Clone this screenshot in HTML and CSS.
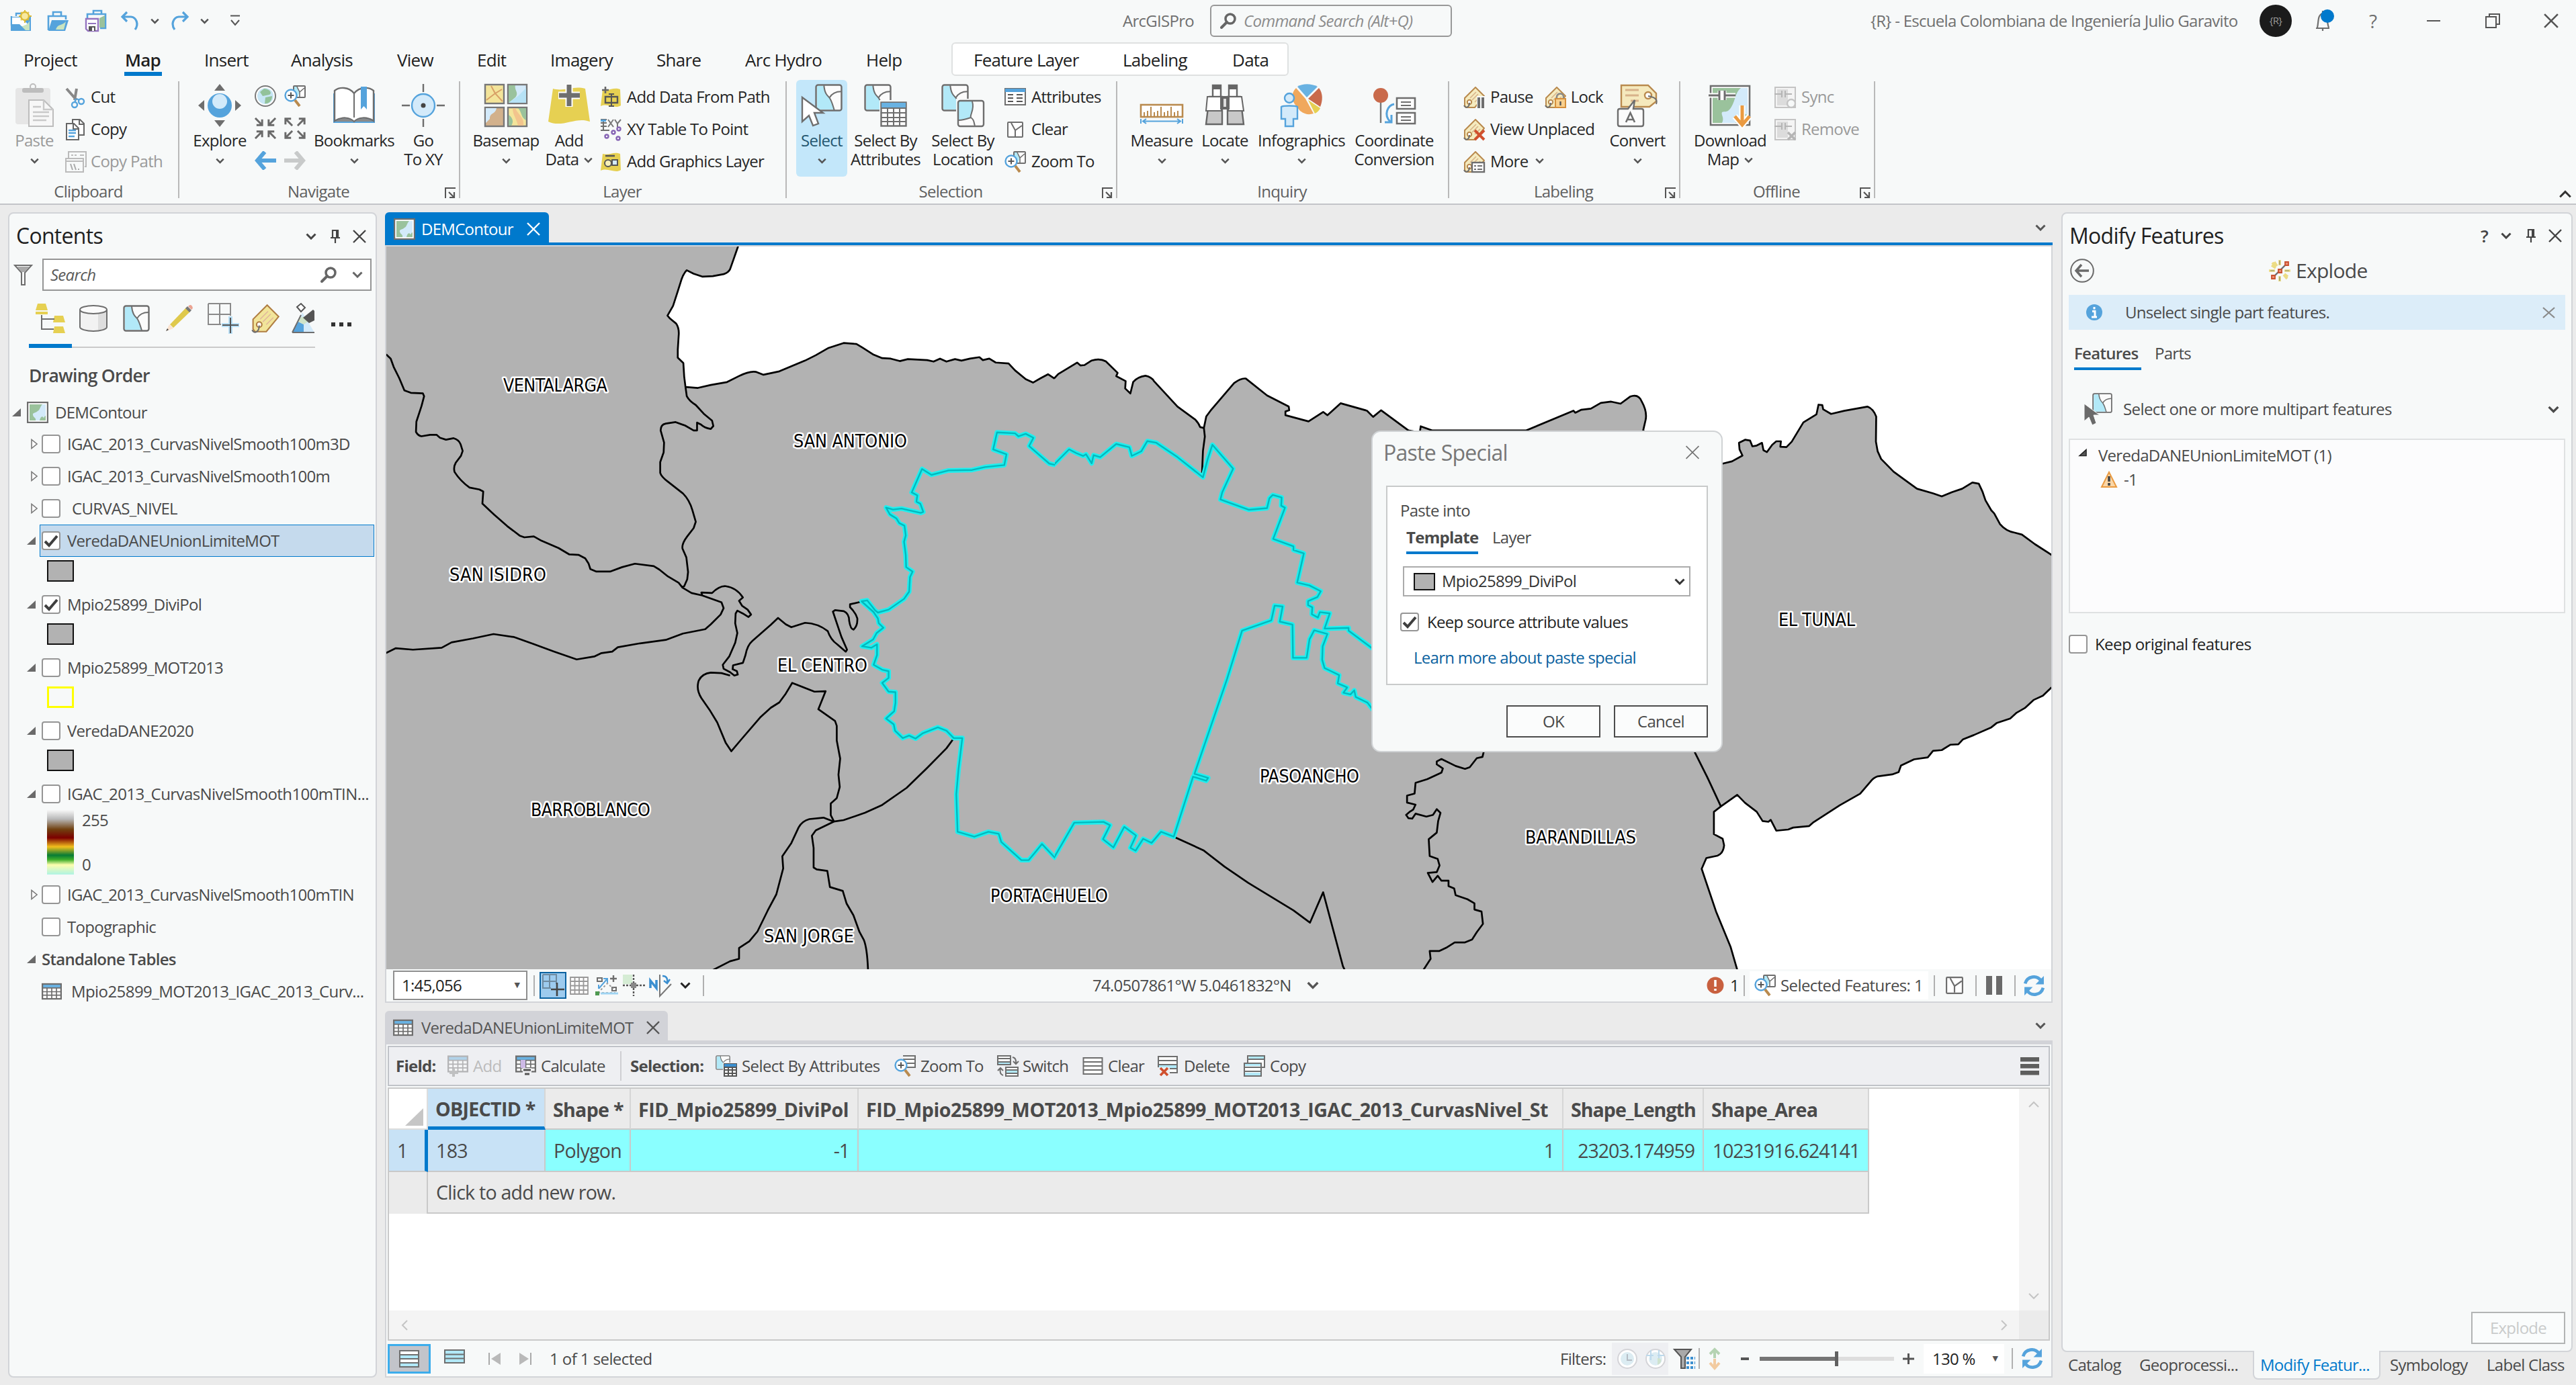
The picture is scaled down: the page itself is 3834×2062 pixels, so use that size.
FILE: index.html
```html
<!DOCTYPE html>
<html lang="en">
<head>
<meta charset="utf-8">
<title>ArcGISPro</title>
<link rel="stylesheet" href="styles.css">
</head>
<body>
<svg class="defs" width="0" height="0">
  <symbol id="chev" viewBox="0 0 16 10"><path d="M1.5 1.5 8 8 14.500 1.500" fill="none" stroke="currentColor" stroke-width="3"/></symbol>
  <symbol id="x" viewBox="0 0 20 20"><path d="M1 1 19 19M19 1 1 19" fill="none" stroke="currentColor" stroke-width="2.400"/></symbol>
  <symbol id="pin" viewBox="0 0 14 20"><path d="M3 12V1H11V12M0 12H14M7 12V20" fill="none" stroke="currentColor" stroke-width="2.200"/><path d="M8 1H12V12H8Z" fill="currentColor"/></symbol>
  <symbol id="mag" viewBox="0 0 24 24"><circle cx="15" cy="9" r="7" fill="none" stroke="currentColor" stroke-width="3.500"/><path d="M10 14 2 22" stroke="currentColor" stroke-width="4" stroke-linecap="round"/></symbol>
  <symbol id="poly" viewBox="0 0 40 40"><rect x="1.500" y="1.500" width="37" height="37" rx="3" fill="#fbfbfb"/><path d="M3 3H13C14 14 18 17 21 20 25 26 26 32 28 37H3Z" fill="#b2e9f8"/><path d="M13 2C14 14 18 17 21 20 25 26 26 32 28 38M21 20C25 13 31 11 38 11" fill="none" stroke="#6e6e6e" stroke-width="2"/><rect x="1.500" y="1.500" width="37" height="37" rx="3" fill="none" stroke="#6e6e6e" stroke-width="2.400"/></symbol>
  <symbol id="table" viewBox="0 0 32 26"><rect x="1.500" y="1.500" width="29" height="23" fill="#fff"/><rect x="1" y="1" width="30" height="6" fill="#69b2e2"/><path d="M1 7.500H31M1 13.500H31M1 19H31M8.500 7V25M16 7V25M23.500 7V25" stroke="#6e6e6e" stroke-width="1.800"/><rect x="1.200" y="1.200" width="29.600" height="23.600" fill="none" stroke="#6e6e6e" stroke-width="2.400"/></symbol>
  <symbol id="map" viewBox="0 0 32 32"><rect x="1" y="1" width="30" height="30" fill="#fff" stroke="#6e6e6e" stroke-width="2.400"/><path d="M4 4H28V28H4Z" fill="#9ac29c"/><path d="M23 4H28V21C25 22 26 25 25 24 22 20 20 24 19 28H13C14 24 10 24 9 20 8 16 13 17 16 14 20 12 19 8 23 4Z" fill="#d3eafa"/></symbol>
  <symbol id="tag" viewBox="0 0 32 32"><path d="M18 1 31 14 17 31H4L2 28V17Z" fill="#f5ebbf" stroke="#b98a4e" stroke-width="2"/><path d="M10 17 19 8M13 20 22 11M17 23 25 15" stroke="#d9b48a" stroke-width="1.600"/><circle cx="9" cy="23" r="3.200" fill="#fff" stroke="#b98a4e" stroke-width="2"/><path d="M9 24C9 31 3 33 1 28" fill="none" stroke="#6e6e6e" stroke-width="2"/></symbol>
  <symbol id="launch" viewBox="0 0 16 16"><path d="M1 16V1H16" fill="none" stroke="#555" stroke-width="2"/><path d="M6 7 13 14M14 7V15H7" fill="none" stroke="#555" stroke-width="2.200"/></symbol>
  <symbol id="refresh" viewBox="0 0 32 32"><path d="M3 13C6 2 20 0 26 9M29 19C26 30 12 32 6 23" fill="none" stroke="#55a3dc" stroke-width="4.500"/><path d="M30 2V14H18ZM2 30V18H14Z" fill="#55a3dc"/></symbol>
  <symbol id="zoomto" viewBox="0 0 32 32"><rect x="14" y="1" width="17" height="17" rx="1" fill="#fff" stroke="#6e6e6e" stroke-width="2"/><path d="M15 2H19L23 10 20 17H15Z" fill="#b2e9f8"/><path d="M19 2 23 10 30 4M23 10V17" fill="none" stroke="#6e6e6e" stroke-width="1.600"/><circle cx="10" cy="15" r="8.500" fill="#fff" stroke="#55a3dc" stroke-width="2.400"/><path d="M10 10.500V19.500M5.500 15H14.500" stroke="#555" stroke-width="2"/><path d="M16 22 23 31" stroke="#b98a4e" stroke-width="4"/></symbol>
  <symbol id="adddata" viewBox="0 0 32 32"><path d="M4 4C14 7 20 0 30 4L31 28C22 34 12 24 1 29Z" fill="#e6d052"/></symbol>
  <symbol id="rows" viewBox="0 0 30 26"><rect x="1" y="1" width="28" height="24" fill="#fff" stroke="#6e6e6e" stroke-width="2"/><path d="M1 7H29M1 13H29M1 19H29" stroke="#6e6e6e" stroke-width="2"/></symbol>
  <symbol id="exp" viewBox="0 0 13 12"><path d="M13 0V12H0Z" fill="#6a6a6a"/></symbol>
  <symbol id="col" viewBox="0 0 10 16"><path d="M1 1.500V14.500L9 8Z" fill="#fff" stroke="#7a7a7a" stroke-width="1.600"/></symbol>
  <symbol id="check" viewBox="0 0 28 28"><path d="M5 15 11 21 23 7" fill="none" stroke="#3f3f3f" stroke-width="4"/></symbol>
  <symbol id="arr" viewBox="0 0 32 28"><path d="M15 1 4 14 15 27M4 14H32" fill="none" stroke="currentColor" stroke-width="6"/></symbol>
  <symbol id="inarr" viewBox="0 0 14 14"><path d="M1 1 11 11M12 3V12H3" fill="none" stroke="#6a6a6a" stroke-width="3.200"/></symbol>
</svg>

<header class="titlebar">
  <svg class="i32" viewBox="0 0 32 32"><path d="M1 10H31V31H1Z" fill="#55a3dc"/><path d="M9 9V5H20M2 9V22H30" fill="none" stroke="#55a3dc" stroke-width="2.400"/><path d="M3 11H17L29 24H3Z" fill="#fff"/><path d="M12 30C18 20 24 26 29 16V30Z" fill="#c9e4c0"/><path d="M1 21H14L24 31H1Z" fill="#55a3dc"/><circle cx="22" cy="9" r="6" fill="#f7e9a0" stroke="#dcbb35" stroke-width="2.400"/><path d="M22 0V3M22 16V19M13 9H15M29 9H32M16 3 17 4M28 3 27 4M16 15 17 14M28 15 27 14" stroke="#dcbb35" stroke-width="2"/></svg>
  <svg class="i32" viewBox="0 0 32 32"><path d="M9 8V3H21V8M2 30V9H28V14" fill="none" stroke="#55a3dc" stroke-width="2.600"/><path d="M7 15H32L27 31H2Z" fill="#55a3dc"/><path d="M13 29C16 20 22 24 28 17L25 29Z" fill="#c9e4c0"/></svg>
  <svg class="i32" viewBox="0 0 32 32"><path d="M12 5V1H24V5M3 14V6H30V27H22" fill="none" stroke="#55a3dc" stroke-width="2.600"/><path d="M21 12 29 8V26H21Z" fill="#9ac29c"/><path d="M1 13H19V31H4L1 28Z" fill="#fff" stroke="#9574c0" stroke-width="2.400"/><path d="M4 20H16" stroke="#9574c0" stroke-width="2"/><path d="M5 24H15V31H5Z" fill="#555"/><path d="M10 26H13V31H10Z" fill="#fff"/></svg>
  <svg class="i30" viewBox="0 0 30 30"><path d="M10 2 3 9 10 16M3 9H16C24 10 28 20 22 28" fill="none" stroke="#55a3dc" stroke-width="3.200"/></svg>
  <svg class="cv c5"><use href="#chev"/></svg>
  <svg class="i30" viewBox="0 0 30 30"><path d="M20 2 27 9 20 16M27 9H14C6 10 2 20 8 28" fill="none" stroke="#55a3dc" stroke-width="3.200"/></svg>
  <svg class="cv c5"><use href="#chev"/></svg>
  <svg width="16" height="18" viewBox="0 0 16 18"><path d="M1 1.500H15M2 8 8 15 14 8" fill="none" stroke="#555" stroke-width="2"/></svg>
  <span class="app">ArcGISPro</span>
  <div class="cmd"><svg width="24" height="24" class="g6"><use href="#mag"/></svg><i>Command Search (Alt+Q)</i></div>
  <span class="org">{R} - Escuela Colombiana de Ingeniería Julio Garavito</span>
  <div class="avatar">{R}</div>
  <svg width="32" height="34" viewBox="0 0 32 34"><path d="M4 28H24M6 27C8 20 6 8 14 6 22 8 20 20 23 27M14 2V6M14 29V32" fill="none" stroke="#6e6e6e" stroke-width="2.200"/><circle cx="21" cy="10" r="10" fill="#0079cc"/></svg>
  <span class="help">?</span>
  <svg width="22" height="22" viewBox="0 0 22 22"><path d="M1 11H21" stroke="#555" stroke-width="2"/></svg>
  <svg width="22" height="22" viewBox="0 0 22 22"><path d="M1 5H16V21H1ZM6 5V1H21V16H16" fill="none" stroke="#555" stroke-width="2"/></svg>
  <svg width="22" height="22" class="g5"><use href="#x"/></svg>
</header>

<nav class="tabs">
  <span>Project</span><span class="on">Map</span><span>Insert</span><span>Analysis</span><span>View</span><span>Edit</span><span>Imagery</span><span>Share</span><span>Arc Hydro</span><span>Help</span>
  <div class="context"><span>Feature Layer</span><span>Labeling</span><span>Data</span></div>
</nav>

<section class="ribbon">
  <div class="group g-clip">
    <div class="tools">
      <div class="big off"><svg viewBox="0 0 64 64"><rect x="4" y="6" width="52" height="54" rx="4" fill="#e6e6e6"/><rect x="14" y="6" width="32" height="7" rx="3" fill="#bdbdbd"/><circle cx="30" cy="4" r="4" fill="none" stroke="#bdbdbd" stroke-width="2"/><path d="M24 24H46L60 38V63H24Z" fill="#f7f7f7" stroke="#bdbdbd" stroke-width="2"/><path d="M46 24V38H60M30 34H42M30 42H54M30 48H54M30 54H50" fill="none" stroke="#c9c9c9" stroke-width="2.400"/></svg><b>Paste</b><svg class="cv"><use href="#chev"/></svg></div>
      <div class="small">
        <div><svg viewBox="0 0 32 32"><path d="M2 3 17 20M17 3 14 20" stroke="#888" stroke-width="4"/><circle cx="14" cy="27" r="4" fill="none" stroke="#55a3dc" stroke-width="2.400"/><circle cx="24" cy="22" r="4" fill="none" stroke="#55a3dc" stroke-width="2.400"/><path d="M17 18 21 20M15 18V23" stroke="#55a3dc" stroke-width="2.400"/></svg>Cut</div>
        <div><svg viewBox="0 0 32 32"><path d="M11 8V1H22L28 7V24H21" fill="#fff" stroke="#666" stroke-width="2"/><path d="M2 7H13L20 14V31H2Z" fill="#fff" stroke="#666" stroke-width="2"/><path d="M12 7V15H20M21 1V8H28" fill="none" stroke="#666" stroke-width="2"/><path d="M5 17H16M5 21H16M5 26H14" stroke="#55a3dc" stroke-width="2.400"/></svg>Copy</div>
        <div class="off"><svg viewBox="0 0 32 32"><path d="M5 10V1H31V23H29" fill="none" stroke="#bbb" stroke-width="2"/><path d="M1 11H27V31H1ZM1 15H27M9 6H12M14 6H17M22 6H28" fill="none" stroke="#bbb" stroke-width="2"/><path d="M8 19 11 28M13 19 16 28M19 27H21" stroke="#aaa" stroke-width="2"/></svg>Copy Path</div>
      </div>
    </div><h4>Clipboard</h4>
  </div>
  <div class="group g-nav">
    <div class="tools">
      <div class="big"><svg viewBox="0 0 64 64"><path d="M32 0 40 10H24ZM32 64 24 54H40ZM0 32 9 24V40ZM64 32 55 24V40Z" fill="#6e6e6e"/><circle cx="32" cy="32" r="18" fill="#55a3dc"/><circle cx="32" cy="26" r="11" fill="#d3eafa"/></svg><b>Explore</b><svg class="cv"><use href="#chev"/></svg></div>
      <div class="six">
        <svg viewBox="0 0 32 32"><circle cx="16" cy="16" r="15" fill="#fff" stroke="#7a7a7a" stroke-width="2"/><circle cx="16" cy="16" r="12" fill="#c7e6f5"/><path d="M14 5C24 6 26 12 22 14L12 16 8 10ZM16 18 26 16C26 24 20 28 15 27Z" fill="#92c29a"/></svg>
        <svg viewBox="0 0 32 32"><use href="#zoomto"/></svg>
        <svg viewBox="0 0 32 32"><use href="#inarr" width="13" height="13"/><use href="#inarr" width="13" height="13" transform="translate(32 0) scale(-1 1)"/><use href="#inarr" width="13" height="13" transform="translate(0 32) scale(1 -1)"/><use href="#inarr" width="13" height="13" transform="translate(32 32) scale(-1 -1)"/></svg>
        <svg viewBox="0 0 32 32"><use href="#inarr" width="13" height="13" transform="translate(13 13) scale(-1 -1)"/><use href="#inarr" width="13" height="13" transform="translate(19 13) scale(1 -1)"/><use href="#inarr" width="13" height="13" transform="translate(13 19) scale(-1 1)"/><use href="#inarr" width="13" height="13" transform="translate(19 19)"/></svg>
        <svg viewBox="0 -2 32 32" class="blue"><use href="#arr" width="32" height="28"/></svg>
        <svg viewBox="0 -2 32 32" class="lg"><use href="#arr" width="32" height="28" transform="translate(32 0) scale(-1 1)"/></svg>
      </div>
      <div class="big w128"><svg viewBox="0 0 64 64"><path d="M1 14V58H63V14" fill="#55a3dc"/><path d="M3 10C10 4 24 4 32 14 40 4 54 4 61 10V55C50 48 38 50 32 56 26 50 14 48 3 55Z" fill="#fff" stroke="#6e6e6e" stroke-width="2.400"/><path d="M4 56C14 49 26 51 32 57 38 51 50 49 60 56Z" fill="#8a8a8a"/><path d="M32 14V50" stroke="#6e6e6e" stroke-width="2"/><path d="M42 4H51V38L46.500 33 42 38Z" fill="#55a3dc"/></svg><b>Bookmarks</b><svg class="cv"><use href="#chev"/></svg></div>
      <div class="big w78"><svg viewBox="0 0 64 64"><path d="M32 0V12M32 52V64M0 32H12M52 32H64" stroke="#6e6e6e" stroke-width="2.400"/><circle cx="32" cy="32" r="17" fill="#d3eafa" stroke="#55a3dc" stroke-width="2.400"/><circle cx="32" cy="32" r="3.500" fill="#444"/></svg><b>Go<br>To XY</b></div>
    </div><h4>Navigate</h4><svg class="launch"><use href="#launch"/></svg>
  </div>
  <div class="group g-layer">
    <div class="tools">
      <div class="big w114"><svg viewBox="0 0 64 64"><g stroke="#777" stroke-width="2.400"><rect x="1" y="1" width="28" height="28" fill="#f3e49a"/><rect x="35" y="1" width="28" height="28" fill="#d3eafa"/><rect x="1" y="35" width="28" height="28" fill="#d2b18c"/><rect x="35" y="35" width="28" height="28" fill="#f3e49a"/></g><path d="M3 24 16 14 27 26M10 3 16 14 26 8" stroke="#d8a066" stroke-width="2" fill="none"/><path d="M36 2H46C44 10 52 12 46 20L36 28Z" fill="#9ac29c"/><path d="M36 28 50 18 62 6V28Z" fill="#b6e2f5"/><path d="M2 36H18C16 46 8 42 8 52L2 58Z" fill="#d3eafa"/><path d="M36 46C42 50 44 56 40 62H36ZM50 36H62V54C54 50 56 42 50 36Z" fill="#9ac29c"/><path d="M46 36C50 46 60 50 58 62H50C48 52 42 46 42 36Z" fill="#f2c48d"/></svg><b>Basemap</b><svg class="cv"><use href="#chev"/></svg></div>
      <div class="big w74"><svg viewBox="0 0 64 64"><path d="M8 7C24 12 38 2 56 7L63 56C42 48 22 66 1 56Z" fill="#e6d052"/><path d="M32 0V34M16 17H48" stroke="#fff" stroke-width="11"/><path d="M32 1V33M17 17H48" stroke="#6e6e6e" stroke-width="7"/></svg><b>Add<br>Data<svg class="cv in"><use href="#chev"/></svg></b></div>
      <div class="small">
        <div><svg viewBox="0 0 32 32"><use href="#adddata"/><path d="M8 0V10M3 5H13" stroke="#666" stroke-width="2.600"/><path d="M8 15H26V24H8Z" fill="none" stroke="#555" stroke-width="2.400"/><path d="M17 11V29M13 11H21M13 29H21" stroke="#555" stroke-width="2"/></svg>Add Data From Path</div>
        <div><svg viewBox="0 0 32 32"><path d="M1 1H10M1 6H10M1 11H10M1 17H14M5 1V17" stroke="#6e6e6e" stroke-width="2"/><path d="M1 1H9V4H1Z" fill="#55a3dc"/><path d="M12 1 20 12M20 1 12 12M22 1 26 7 31 1M26 7V12" stroke="#777" stroke-width="2" fill="none"/><g fill="none" stroke="#8765b5" stroke-width="2.400"><circle cx="28" cy="15" r="2.500"/><circle cx="20" cy="20" r="2.500"/><circle cx="10" cy="26" r="2.500"/><circle cx="27" cy="29" r="2.500"/></g></svg>XY Table To Point</div>
        <div><svg viewBox="0 0 32 32"><use href="#adddata"/><path d="M8 7H22" stroke="#555" stroke-width="2.600"/><circle cx="12" cy="18" r="5" fill="#f7f0b8" stroke="#555" stroke-width="2"/><rect x="18" y="13" width="8" height="8" fill="#d3eafa" stroke="#555" stroke-width="2"/></svg>Add Graphics Layer</div>
      </div>
    </div><h4>Layer</h4>
  </div>
  <div class="group g-sel">
    <div class="tools">
      <div class="big sel"><svg viewBox="0 0 64 64"><use href="#poly" x="22" y="0" width="41" height="41"/><path d="M3 20 34 43H21L27 59 19 62 13 47 3 56Z" fill="#fff" stroke="#6e6e6e" stroke-width="2.400"/></svg><b>Select</b><svg class="cv"><use href="#chev"/></svg></div>
      <div class="big w114"><svg viewBox="0 0 64 64"><use href="#poly" width="41" height="41"/><path d="M23 24H64V64H23Z" fill="#f7f9f9"/><rect x="25.500" y="27.500" width="37" height="35" fill="#fff" stroke="#6e6e6e" stroke-width="2.400"/><path d="M26 28H62V36H26Z" fill="#69b2e2"/><path d="M25 36H63M25 43H63M25 50H63M25 56H63M35 36V63M44 36V63M53 36V63" stroke="#6e6e6e" stroke-width="2"/></svg><b>Select By<br>Attributes</b></div>
      <div class="big w116"><svg viewBox="0 0 64 64"><use href="#poly" width="41" height="41"/><path d="M22 22H64V64H22Z" fill="#f7f9f9"/><rect x="25" y="25" width="38" height="38" rx="3" fill="#fbfbfb"/><path d="M26 26H46C50 38 42 46 44 50 38 52 32 54 26 54Z" fill="#b2e9f8"/><path d="M46 26C50 38 42 46 44 50 50 54 48 58 50 62M44 50C38 52 32 54 26 54" fill="none" stroke="#6e6e6e" stroke-width="2"/><rect x="25" y="25" width="38" height="38" rx="3" fill="none" stroke="#6e6e6e" stroke-width="2.400"/></svg><b>Select By<br>Location</b></div>
      <div class="small">
        <div><svg viewBox="0 0 32 32"><rect x="1" y="3" width="30" height="24" fill="#fff" stroke="#6e6e6e" stroke-width="2"/><path d="M1 3H31V8H1Z" fill="#55a3dc"/><path d="M5 12H13M5 17H13M5 22H13M18 12H27M18 17H27M18 22H27" stroke="#555" stroke-width="2"/></svg>Attributes</div>
        <div><svg viewBox="0 0 32 32"><rect x="5" y="5" width="22" height="22" rx="1" fill="#fff" stroke="#6e6e6e" stroke-width="2"/><path d="M10 6 16 17 26 10M16 17V26" fill="none" stroke="#6e6e6e" stroke-width="2"/></svg>Clear</div>
        <div><svg viewBox="0 0 32 32"><use href="#zoomto"/></svg>Zoom To</div>
      </div>
    </div><h4>Selection</h4><svg class="launch"><use href="#launch"/></svg>
  </div>
  <div class="group g-inq">
    <div class="tools">
      <div class="big w96"><svg viewBox="0 0 64 64"><rect x="1" y="31" width="62" height="18" fill="#fff" stroke="#b98a4e" stroke-width="2.600"/><path d="M6 49V42M11 49V40M16 49V34M21 49V42M26 49V40M31 49V34M36 49V42M41 49V40M46 49V34M51 49V42M56 49V40" stroke="#b98a4e" stroke-width="2"/><path d="M1 52V59M63 52V59M4 55.500H60M9 52 4 55.500 9 59M55 52 60 55.500 55 59" fill="none" stroke="#55a3dc" stroke-width="2"/></svg><b>Measure</b><svg class="cv"><use href="#chev"/></svg></div>
      <div class="big w92"><svg viewBox="0 0 64 64"><g fill="#fff" stroke="#666" stroke-width="2.400"><path d="M14 2H26V20H14ZM38 2H50V20H38Z"/><path d="M9 19H28V60H4Z" fill="#c8c8c8"/><path d="M36 19H55L60 60H36Z" fill="#c8c8c8"/></g><path d="M4 40 6 19H27V40ZM37 40V19H57L60 40Z" fill="#fff" stroke="#666" stroke-width="2"/><path d="M14 2H26V8H14ZM38 2H50V8H38ZM25 18H39V38H25Z" fill="#666"/><path d="M30 22H34V34H30Z" fill="#ddd"/></svg><b>Locate</b><svg class="cv"><use href="#chev"/></svg></div>
      <div class="big w136"><svg viewBox="0 0 64 64"><path d="M40 20 26 4C34 -1 46 -1 56 4Z" fill="#69b2e2"/><path d="M42 22 58 6C64 14 64 24 60 34Z" fill="#c96a4b"/><path d="M42 24 60 36C58 40 56 42 52 44Z" fill="#e6d052"/><path d="M38 22 24 6C16 14 18 24 22 30L30 40C38 46 44 46 50 44Z" fill="#f0a85c"/><circle cx="14" cy="21" r="7" fill="#d3eafa" stroke="#55a3dc" stroke-width="2.400"/><path d="M2 34C4 32 24 32 26 34V52H20V63H8V52H2Z" fill="#d3eafa" stroke="#55a3dc" stroke-width="2.400"/></svg><b>Infographics</b><svg class="cv"><use href="#chev"/></svg></div>
      <div class="big w140"><svg viewBox="0 0 64 64"><path d="M12 20V58" stroke="#777" stroke-width="2.400"/><circle cx="12" cy="17" r="11" fill="#c96a4b"/><path d="M36 21H63V37H36ZM36 43H63V59H36Z" fill="#fff" stroke="#6e6e6e" stroke-width="2.600"/><path d="M42 27H57M42 32H57M42 49H57M42 54H57" stroke="#6e6e6e" stroke-width="2"/><path d="M32 30C22 32 16 46 26 56M28 46V57H18" fill="none" stroke="#55a3dc" stroke-width="3"/></svg><b>Coordinate<br>Conversion</b></div>
    </div><h4>Inquiry</h4>
  </div>
  <div class="group g-lab">
    <div class="tools">
      <div class="small">
        <div><svg viewBox="0 0 32 32"><use href="#tag"/><path d="M20 14H32V32H20Z" fill="#f7f9f9"/><path d="M23 16V32M29 16V32" stroke="#6e6e6e" stroke-width="4"/></svg>Pause<svg class="lock" viewBox="0 0 32 32"><use href="#tag"/><path d="M18 19V15C18 9 28 9 28 15V19" fill="none" stroke="#888" stroke-width="2.400"/><rect x="16" y="18" width="15" height="13" fill="#f9d08d" stroke="#d58f3c" stroke-width="2"/><path d="M23.500 22V28" stroke="#555" stroke-width="2.400"/></svg>Lock</div>
        <div><svg viewBox="0 0 32 32"><use href="#tag"/><path d="M17 17 31 31M31 17 17 31" stroke="#d0502e" stroke-width="4"/></svg>View Unplaced</div>
        <div><svg viewBox="0 0 32 32"><use href="#tag"/><rect x="13" y="17" width="18" height="14" fill="#fff" stroke="#6e6e6e" stroke-width="2.400"/><path d="M16 22H19M16 27H19M21 22H28M21 27H28" stroke="#6e6e6e" stroke-width="2"/></svg>More<svg class="cv more"><use href="#chev"/></svg></div>
      </div>
      <div class="big w92"><svg viewBox="0 0 64 64"><path d="M8 2H48L60 14V26L50 34H8Z" fill="#f5e9bd" stroke="#b98a4e" stroke-width="2.400"/><path d="M14 9H34M14 17H34M22 25H34" stroke="#d8b28a" stroke-width="3"/><circle cx="48" cy="17" r="5" fill="#fff" stroke="#b98a4e" stroke-width="2.400"/><path d="M48 18C60 20 62 24 60 30" fill="none" stroke="#6e6e6e" stroke-width="2"/><path d="M6 37H18L28 24 26 37H38Q41 37 41 40V60Q41 63 38 63H6Q3 63 3 60V40Q3 37 6 37Z" fill="#fbfbfb" stroke="#6e6e6e" stroke-width="2.400"/><path d="M15 57 21.500 43 28 57M17 53H26" fill="none" stroke="#6e6e6e" stroke-width="2.600"/></svg><b>Convert</b><svg class="cv"><use href="#chev"/></svg></div>
    </div><h4>Labeling</h4><svg class="launch"><use href="#launch"/></svg>
  </div>
  <div class="group g-off">
    <div class="tools">
      <div class="big w120"><svg viewBox="0 0 64 64"><rect x="3" y="3" width="58" height="58" fill="#fff" stroke="#6e6e6e" stroke-width="2.600"/><path d="M6 6H58V58H6Z" fill="#9ac29c"/><path d="M48 6H58V46C54 46 52 40 48 48L40 58H20C24 50 18 46 20 42 24 40 28 44 34 34 40 24 40 12 48 6Z" fill="#d3eafa"/><path d="M0 17H14M26 17H40M17 10V24M23 10V24" stroke="#fff" stroke-width="7"/><path d="M0 17H15M25 17H40M16 10V24M24 10V24" stroke="#6e6e6e" stroke-width="3"/><path d="M50 32V60M39 48 50 61 61 48" fill="none" stroke="#fff" stroke-width="9"/><path d="M50 32V60M39 48 50 61 61 48" fill="none" stroke="#ea9a41" stroke-width="5"/></svg><b>Download<br>Map<svg class="cv in"><use href="#chev"/></svg></b></div>
      <div class="small">
        <div class="off"><svg viewBox="0 0 32 32"><rect x="1" y="1" width="30" height="30" fill="#f4f4f4" stroke="#c4c4c4" stroke-width="2"/><path d="M4 4H20V28H4Z" fill="#dcdcdc"/><path d="M0 11H11M15 11H26M11 6V16M16 6V16" stroke="#b5b5b5" stroke-width="2"/><circle cx="25" cy="25" r="6" fill="#f7f9f9" stroke="#c4c4c4" stroke-width="2.400"/></svg>Sync</div>
        <div class="off"><svg viewBox="0 0 32 32"><rect x="1" y="1" width="30" height="30" fill="#f4f4f4" stroke="#c4c4c4" stroke-width="2"/><path d="M4 4H20V28H4Z" fill="#dcdcdc"/><path d="M0 11H11M15 11H26M11 6V16M16 6V16" stroke="#b5b5b5" stroke-width="2"/><path d="M20 20 31 31M31 20 20 31" stroke="#b5b5b5" stroke-width="3.500"/></svg>Remove</div>
      </div>
    </div><h4>Offline</h4><svg class="launch"><use href="#launch"/></svg>
  </div>
  <svg class="collapse" width="20" height="12" viewBox="0 0 16 10"><path d="M1.500 8.500 8 2 14.500 8.500" fill="none" stroke="#333" stroke-width="2.400"/></svg>
</section>

<main class="work">
  <aside class="panel contents">
    <div class="phead"><h2>Contents</h2><svg width="16" height="10"><use href="#chev"/></svg><svg width="14" height="20"><use href="#pin"/></svg><svg width="20" height="20"><use href="#x"/></svg></div>
    <div class="searchrow">
      <svg width="27" height="32" viewBox="0 0 27 32"><path d="M1 2H26L16 13V31H11V13Z" fill="#f7f9f9" stroke="#6e6e6e" stroke-width="2"/><path d="M4 4H23L16 12H11Z" fill="#a9a9a9"/></svg>
      <div class="search"><i>Search</i><svg width="24" height="24"><use href="#mag"/></svg><svg width="16" height="10"><use href="#chev"/></svg></div>
    </div>
    <div class="ticons">
      <svg width="44" height="44" viewBox="0 0 44 44"><path d="M3 0H15L18 10H0ZM0 12H18V16H0ZM28 18H41L44 28H26ZM28 34H41L44 44H26Z" fill="#e6d052"/><path d="M9 17V38H27M9 23H28" fill="none" stroke="#6e6e6e" stroke-width="2"/></svg>
      <svg width="42" height="40" viewBox="0 0 42 40"><path d="M1 7V33C1 36 10 39 21 39S41 36 41 33V7Z" fill="#f2f2f2"/><path d="M28 12 41 8V34L28 38Z" fill="#dedede"/><path d="M1 7V33C1 36 10 39 21 39S41 36 41 33V7" fill="none" stroke="#6e6e6e" stroke-width="2"/><ellipse cx="21" cy="7" rx="20" ry="6" fill="#fbfbfb" stroke="#6e6e6e" stroke-width="2"/></svg>
      <svg width="40" height="40"><use href="#poly"/></svg>
      <svg width="40" height="40" viewBox="0 0 40 40"><path d="M6 29 30 4 36 10 11 34Z" fill="#dfc94c"/><path d="M0 39 5 29 11 35Z" fill="#fbe3cf"/><path d="M0 39 2 35 4 37Z" fill="#444"/><path d="M29 5 32 2 38 8 35 11Z" fill="#777"/><path d="M33 2Q37 -2 39 2 41 5 38 7Z" fill="#eba391"/></svg>
      <svg width="48" height="48" viewBox="0 0 48 48"><path d="M1 2H34V20M1 2V33H20M18 2V33M1 18H34" fill="none" stroke="#8a8a8a" stroke-width="2"/><path d="M34 21V47M21 34H47" stroke="#b8dff6" stroke-width="6"/><path d="M34 23V46M22 34H46" stroke="#555" stroke-width="2"/></svg>
      <svg width="42" height="42" viewBox="0 0 32 32"><path d="M18 1 31 14 17 31H4L2 28V17Z" fill="#f2e59a" stroke="#b07e43" stroke-width="1.600"/><path d="M10 17 19 8M13 20 22 11M17 23 25 15" stroke="#e0b79c" stroke-width="1.200"/><circle cx="9" cy="23" r="3" fill="#fff" stroke="#b07e43" stroke-width="1.600"/><path d="M9 24C9 32 3 34 1 29" fill="none" stroke="#6e6e6e" stroke-width="1.600"/></svg>
      <svg width="34" height="46" viewBox="0 0 34 46"><path d="M1 44 16 14 34 44Z" fill="#d3eafa"/><path d="M1 44 10 28 18 32 18 44Z" fill="#55a3dc"/><path d="M12 22 20 20 24 28 18 32 10 28Z" fill="#cfe3c8"/><path d="M1 44H34M1 44 14 18" stroke="#6e6e6e" stroke-width="2" fill="none"/><path d="M8 6 14 1 20 7 14 13Z" fill="#fff" stroke="#555" stroke-width="2"/><path d="M17 22 32 10 34 12V26L26 30Z" fill="#555"/></svg>
      <svg width="31" height="6" viewBox="0 0 31 6"><path d="M0 0H6V6H0ZM12 0H18V6H12ZM24 0H30V6H24Z" fill="#333"/></svg>
    </div>
    <div class="tline"><span></span></div>
    <h3>Drawing Order</h3>
    <div class="tree">
      <div class="row root"><svg width="13" height="12"><use href="#exp"/></svg><svg width="32" height="32"><use href="#map"/></svg><span>DEMContour</span></div>
      <div class="row"><svg class="col"><use href="#col"/></svg><div class="item"><i class="cb"></i><span>IGAC_2013_CurvasNivelSmooth100m3D</span></div></div>
      <div class="row"><svg class="col"><use href="#col"/></svg><div class="item"><i class="cb"></i><span>IGAC_2013_CurvasNivelSmooth100m</span></div></div>
      <div class="row"><svg class="col"><use href="#col"/></svg><div class="item"><i class="cb"></i><span class="ind">CURVAS_NIVEL</span></div></div>
      <div class="row"><svg class="ex"><use href="#exp"/></svg><div class="item selrow"><i class="cb"><svg><use href="#check"/></svg></i><span>VeredaDANEUnionLimiteMOT</span></div></div>
      <div class="sw first"><i></i></div>
      <div class="row"><svg class="ex"><use href="#exp"/></svg><div class="item"><i class="cb"><svg><use href="#check"/></svg></i><span>Mpio25899_DiviPol</span></div></div>
      <div class="sw"><i></i></div>
      <div class="row"><svg class="ex"><use href="#exp"/></svg><div class="item"><i class="cb"></i><span>Mpio25899_MOT2013</span></div></div>
      <div class="sw"><i class="yellow"></i></div>
      <div class="row"><svg class="ex"><use href="#exp"/></svg><div class="item"><i class="cb"></i><span>VeredaDANE2020</span></div></div>
      <div class="sw"><i></i></div>
      <div class="row"><svg class="ex"><use href="#exp"/></svg><div class="item"><i class="cb"></i><span class="cut">IGAC_2013_CurvasNivelSmooth100mTIN...</span></div></div>
      <div class="ramp"><i></i><div><span>255</span><span>0</span></div></div>
      <div class="row"><svg class="col"><use href="#col"/></svg><div class="item"><i class="cb"></i><span>IGAC_2013_CurvasNivelSmooth100mTIN</span></div></div>
      <div class="row"><svg class="ex"></svg><div class="item"><i class="cb"></i><span>Topographic</span></div></div>
      <div class="row"><svg class="ex"><use href="#exp"/></svg><div class="item"><b>Standalone Tables</b></div></div>
      <div class="row"><svg class="ex"></svg><div class="item"><svg width="30" height="26"><use href="#table"/></svg><span class="tb cut">Mpio25899_MOT2013_IGAC_2013_Curv...</span></div></div>
    </div>
  </aside>

  <section class="center">
    <div class="mtabs"><div class="mtab"><svg width="32" height="32"><use href="#map"/></svg><span>DEMContour</span><svg width="20" height="20"><use href="#x"/></svg></div><svg class="mchev" width="16" height="10"><use href="#chev"/></svg></div>
    <div class="mapframe">
      <svg class="mapsvg" viewBox="575 367 2478 1076">
        <rect x="575" y="367" width="2478" height="1076" fill="#fff"/>
        <svg x="570" y="310" width="1000" height="1140" viewBox="0 0 1568 1568" preserveAspectRatio="none">
          <rect width="1568" height="1568" fill="#b2b2b2"/>
          <g class="ln">
          <path class="w" d="M832 70L826 85L818 105L810 125Q806 132 795 135L770 139L745 140L725 134L709 127Q702 133 697 145L688 170L677 200L664 220L670 226L684 236Q692 246 690 262L688 290L688 306L701 317L703 345L706 366L735 368L765 362L803 356L830 344Q855 333 870 335L888 341L925 334L955 323L985 312L1010 301L1040 286L1075 276L1105 278L1120 286L1145 300L1165 307L1185 308L1206 313L1225 309L1270 311L1285 314L1300 308L1315 314L1335 309L1350 312L1370 308L1392 305L1400 311L1415 308L1430 316L1460 318L1475 332L1500 350L1517 357L1535 348L1552 340L1566 348L1580 340V-20H832"/>
          <path d="M706 366L709 385Q715 395 730 403L750 422L768 435L771 446L765 452Q750 450 742 443L733 439L733 455L725 455L705 445L683 438L660 441Q648 443 648 455L656 480L655 500L647 520L647 542Q650 550 665 560L700 584Q715 597 722 618L730 642L725 655L710 672Q697 687 699 697L708 715L712 745L710 760L703 774L697 776"/>
          <path d="M0 298L8 300L18 308L25 325L38 348L50 373L65 378L93 379L96 385L90 405L78 437L77 458Q82 466 90 467L110 464L125 464L133 470L147 474L165 471Q177 474 181 483L186 497L182 507L170 521Q164 530 167 540Q180 558 202 572L225 576L234 580L232 605L260 628L290 651L320 671L330 674L352 672L370 681L410 696L435 709L457 710L472 717L480 728L484 739L498 744L530 744L558 735L588 728L632 733L645 740L665 754L690 767L699 777L720 788L745 793L790 807L795 819L788 832L765 852L752 862L700 871L660 884L600 891L548 899L535 908L510 911L493 918L452 924L400 908L350 892L305 878L258 872L210 881L160 889L137 900L70 904L30 901L0 914"/>
          <path d="M745 793L743 787L768 788Q785 773 800 774Q825 777 840 797L831 804L838 814L851 822L859 832L853 837L840 830L827 824L823 830L822 850L827 870L822 890L808 918L793 935L795 943L810 950L820 957L828 955L826 948L816 944L817 936L840 931L846 915Q850 895 862 886L905 853L922 839L940 852L953 858L985 849Q1015 850 1038 866Q1045 884 1060 893L1080 908L1083 904L1070 878L1050 826L1055 823L1075 825Q1088 830 1088 845Q1091 862 1098 863Q1108 855 1107 840Q1103 828 1090 817L1090 811L1115 806"/>
          <path d="M810 957L790 952L765 951Q745 953 737 967Q730 985 743 1003L762 1027L780 1053L800 1095L813 1112L835 1089L880 1043L905 1023L925 1012L940 994L955 972L1007 990L1033 989L1016 1026L1055 1050L1059 1060L1059 1090L1067 1127L1063 1160L1066 1185L1059 1208L1045 1219L1045 1243L1052 1255"/>
          <path d="M1330 1088L1315 1106L1270 1146L1222 1187L1165 1222L1125 1238L1075 1253L1052 1256L1028 1248L995 1251Q978 1255 970 1268L953 1300L932 1327L934 1352L918 1405L898 1438L874 1481L855 1501L831 1515L831 1537L810 1542L770 1560"/>
          <path d="M1052 1256L1010 1274L1001 1285L1005 1310L1005 1350L1012 1354L1037 1357L1043 1390L1073 1398L1082 1424L1098 1448L1112 1482L1122 1498Q1130 1515 1132 1560"/>
          </g>
          <g class="cy"><path id="c6" d="M1580 528L1555 523L1530 504L1508 487L1518 470L1500 462L1483 467L1475 461L1433 459L1424 494L1455 504L1450 526L1405 530L1375 536L1320 537L1280 546L1258 534L1234 582L1247 588L1245 601L1254 605L1261 622L1255 624L1210 615L1190 617L1174 613L1183 627L1198 635L1205 645L1217 650L1220 670L1216 683L1220 710L1221 735L1236 744L1230 755L1228 785L1216 800L1180 822L1155 828L1148 823L1130 803L1117 805L1145 827L1155 840L1157 850L1168 859L1152 870L1144 883L1118 897L1140 900L1153 893L1153 915L1145 935L1165 945L1180 948L1180 962L1165 972L1180 990L1196 991L1196 1013L1193 1030L1174 1045L1192 1057L1195 1070L1213 1085L1228 1080L1243 1086L1260 1075L1295 1063L1315 1070L1332 1085L1352 1085L1343 1150L1338 1200L1341 1277L1380 1287L1413 1277L1437 1281L1443 1298L1490 1335L1507 1335L1538 1302L1568 1330L1576 1316"/></g>
          <use href="#c6" class="cd"/>
        </svg>
        <svg x="1570" y="500" width="930" height="960" viewBox="99.8 0 1325.65 1568" preserveAspectRatio="none">
          <g class="ln">
          <path class="g" d="M80 94L90 98L98 104L107 93L147 65L154 72L163 71L178 60Q195 54 208 62L233 90L230 98L250 110L249 128L260 140L266 112Q275 100 292 97Q305 100 310 110L360 172L397 203Q405 212 408 222L416 224L421 196L430 182L480 115Q495 102 505 104L550 145L596 172L597 181L589 184L589 193L638 208L669 185L678 193L706 164L762 182L775 197L792 181L850 230L874 235L876 220L900 230L1100 230L1200 182L1204 187L1216 180L1237 177L1258 163L1280 160L1300 165L1320 148Q1338 140 1345 160Q1357 185 1353 205L1348 230L1440 320V1600H80Z"/>
          <path d="M416 224L418 245L414 280L412 335"/>
          <path d="M1010 1010L1007 1024L995 1027L980 1049L970 1053L950 1046L920 1029L910 1035L910 1042L923 1052L920 1062L890 1078L865 1087L863 1113L847 1118L847 1135L865 1140L860 1152L852 1158L845 1165L850 1173L858 1174L865 1162L888 1169L902 1165L910 1151L918 1160L913 1180L910 1208L893 1224L895 1265L912 1272L916 1288L910 1304L891 1306L901 1328L912 1313L920 1325L935 1325L935 1338L947 1344L950 1360L975 1370L990 1380L990 1395L1005 1400L1008 1430L995 1450L985 1468L970 1475L948 1475L930 1488L915 1496L895 1496L897 1515L880 1545"/>
          <path d="M352 1218L415 1251L460 1291L510 1330L606 1397L641 1427L669 1353L711 1533L716 1545"/>
          </g>
          <g class="cy"><path id="c7" d="M80 308L85 312L98 313L130 276L145 285L160 292L166 288L178 310L182 290L196 295L230 263L258 271L263 292L283 281L296 256L315 260L360 295L414 344L424 300L434 265L478 323L455 380L451 398L511 423L550 419L555 395L562 387L581 393L580 413L588 418L563 494L606 512L606 521L628 529L614 600L640 607L664 621L657 635L637 645L637 655L646 660L645 677L658 685L662 672L683 675L672 712L723 710L723 717L785 770M785 925L763 892L738 878L735 862L727 872L712 868L720 855L700 845L703 825L685 815L672 808L667 788L668 755L678 725L650 716L640 738L634 783L605 783L604 702L577 695L583 658L566 656L559 692L497 717L465 835L396 1065L425 1075L421 1082L393 1072L352 1218L325 1206L305 1233L287 1223L271 1252L260 1245L272 1215L247 1194L224 1244L202 1224L217 1190L203 1182L141 1184L98 1269L72 1237"/></g>
          <use href="#c7" class="cd"/>
        </svg>
        <svg x="2500" y="560" width="555" height="900" viewBox="230.6 0 1279.8 1568" preserveAspectRatio="none">
          <g class="ln">
          <path class="g" d="M220 260L378 227L410 221L446 206L436 190L434 173L455 165L472 167L480 182L495 180L513 173L518 192L530 197L548 178L562 169L578 169L576 183L597 184L615 170L655 120L700 99L707 74L720 75L723 86L750 98L795 90L875 79Q895 85 905 105L904 170L910 195L922 215L965 248L1010 273L1045 292L1100 304L1130 312L1165 301L1200 292L1235 276L1257 279L1270 300L1280 322L1300 348L1310 356L1330 384Q1350 402 1380 406L1405 411L1450 436L1520 470V800L1503 810L1477 829L1445 840L1415 861L1387 873L1365 888L1318 900L1300 911L1240 931L1203 942L1187 955L1160 956L1130 970L1100 972L1082 989L1035 994L990 1010L982 1027L960 1033L910 1038Q895 1042 885 1052L850 1083L780 1113L690 1157L675 1167L620 1171L603 1176L562 1179L543 1151L535 1156L515 1154L495 1130L455 1107L428 1086L372 1116L348 1130L348 1188L378 1200L383 1217Q380 1238 360 1244L322 1250L306 1278L355 1388L405 1480L430 1545V1600H200Z"/>
          <path d="M282 975L325 1040L372 1116"/>
          </g>
        </svg>
        <g class="lbl">
          <text x="749" y="583" textLength="155">VENTALARGA</text>
          <text x="1181" y="666" textLength="169">SAN ANTONIO</text>
          <text x="669" y="865" textLength="144">SAN ISIDRO</text>
          <text x="1157" y="1000" textLength="134">EL CENTRO</text>
          <text x="790" y="1215" textLength="178">BARROBLANCO</text>
          <text x="1137" y="1403" textLength="134">SAN JORGE</text>
          <text x="1474" y="1343" textLength="175">PORTACHUELO</text>
          <text x="1875" y="1165" textLength="148">PASOANCHO</text>
          <text x="2270" y="1256" textLength="165">BARANDILLAS</text>
          <text x="2647" y="932" textLength="114">EL TUNAL</text>
        </g>
      </svg>
      <div class="mstatus">
        <div class="scale"><span>1:45,056</span><em>▼</em></div><s></s>
        <div class="hl"><svg width="34" height="36" viewBox="0 0 34 36"><path d="M2 2H22V16M2 2V22H14M12 2V22M2 12H22" fill="none" stroke="#6e8aa0" stroke-width="2"/><path d="M23 14V34M14 24H34" stroke="#444" stroke-width="2.600"/></svg></div>
        <svg width="28" height="27" viewBox="0 0 28 27"><path d="M1 1H27V26H1ZM1 7H27M1 13.500H27M1 20H27M7.500 1V26M14 1V26M20.500 1V26" fill="#fff" stroke="#999" stroke-width="1.800"/></svg>
        <svg width="34" height="30" viewBox="0 0 34 30"><path d="M3 4H10V9H3ZM25 18H31V23H25Z" fill="none" stroke="#6e6e6e" stroke-width="2"/><path d="M27 0V10M22 5H32" stroke="#6e6e6e" stroke-width="2.400"/><path d="M5 20 18 5M12 5H18V11M5 14V20" fill="none" stroke="#55a3dc" stroke-width="2"/><path d="M4 26 18 12 27 20M4 26H30" fill="none" stroke="#999" stroke-width="2" stroke-dasharray="3 3"/><path d="M8 27H34" stroke="#9fd4f2" stroke-width="3"/><path d="M0 24H6V30H0Z" fill="#4e9a51"/></svg>
        <svg width="33" height="32" viewBox="0 0 33 32"><path d="M0 0H14V14H0Z" fill="#d5ecd4"/><path d="M16 0V32M0 16H33" stroke="#555" stroke-width="2.400" stroke-dasharray="3 2"/><path d="M12 12H20V20H12Z" fill="#888"/></svg>
        <svg width="34" height="32" viewBox="0 0 34 32"><path d="M2 20V9L11 20V8" fill="none" stroke="#3b8fd0" stroke-width="3.500"/><path d="M16 0V32L33 14" fill="none" stroke="#777" stroke-width="2"/><path d="M20 2C26 2 28 6 27 12M22 9 27 13 31 7" fill="none" stroke="#3b8fd0" stroke-width="2.400"/></svg>
        <svg width="16" height="10" class="k"><use href="#chev"/></svg><s></s>
        <span>74.0507861°W 5.0461832°N</span><svg width="18" height="12" class="k5"><use href="#chev"/></svg>
        <svg width="26" height="26" viewBox="0 0 26 26"><circle cx="13" cy="13" r="12.500" fill="#c8603f"/><path d="M13 5V15M13 18V21" stroke="#fff" stroke-width="3.500"/></svg><span class="k">1</span><s></s>
        <div class="selfeat"><svg width="34" height="32"><use href="#zoomto"/></svg><span>Selected Features: 1</span></div><s></s>
        <svg width="26" height="26" viewBox="4 4 24 24"><rect x="5" y="5" width="22" height="22" rx="1" fill="#fff" stroke="#6e6e6e" stroke-width="2"/><path d="M10 6 16 17 26 10M16 17V26" fill="none" stroke="#6e6e6e" stroke-width="2"/></svg><s></s>
        <svg width="24" height="28" viewBox="0 0 24 28"><path d="M0 0H9V28H0ZM15 0H24V28H15Z" fill="#6a6a6a"/></svg><s></s>
        <svg width="33" height="33"><use href="#refresh"/></svg>
      </div>
    </div>

    <div class="ttabs"><div class="ttab"><svg width="30" height="26"><use href="#table"/></svg><span>VeredaDANEUnionLimiteMOT</span><svg width="20" height="20"><use href="#x"/></svg></div><svg class="mchev" width="16" height="10"><use href="#chev"/></svg></div>
    <div class="tpanel">
      <div class="ttool">
        <b>Field:</b>
        <svg class="fade" width="31" height="32" viewBox="0 0 31 32"><use href="#table" width="31" height="26"/><path d="M9 20V32M3 26H16" stroke="#888" stroke-width="4"/></svg><span class="dis">Add</span>
        <svg width="31" height="32" viewBox="0 0 31 32"><use href="#table" width="31" height="26"/><path d="M8 7H15V19H8Z" fill="#cdb9e6"/><path d="M11 19H24V32H11Z" fill="#eeeff2"/><path d="M12 22H23M14 28H21" stroke="#555" stroke-width="3"/></svg><span>Calculate</span><s></s>
        <b>Selection:</b>
        <svg width="32" height="32" viewBox="0 0 32 32"><use href="#poly" width="22" height="22"/><path d="M11 11H32V32H11Z" fill="#eeeff2"/><rect x="13" y="13" width="18" height="18" fill="#fff" stroke="#555" stroke-width="2"/><path d="M13 13H31V18H13Z" fill="#3b8fd0"/><path d="M13 18H31M13 22H31M13 27H31M19 18V31M25 18V31" stroke="#555" stroke-width="2"/></svg><span class="cut">Select By Attributes</span>
        <svg width="32" height="32" viewBox="0 0 32 32"><path d="M13 1H31V18H13M13 6H31M13 12H31" fill="#fff" stroke="#6e6e6e" stroke-width="2"/><circle cx="10" cy="15" r="8.500" fill="#fff" stroke="#55a3dc" stroke-width="2.400"/><path d="M10 10.500V19.500M5.500 15H14.500" stroke="#555" stroke-width="2"/><path d="M16 22 23 31" stroke="#b98a4e" stroke-width="4"/></svg><span>Zoom To</span>
        <svg width="32" height="32" viewBox="0 0 32 32"><path d="M1 1H20V14H1ZM13 18H31V31H13Z" fill="#fff" stroke="#6e6e6e" stroke-width="2"/><path d="M1 5H20M1 10H20M13 22H31M13 27H31" stroke="#6e6e6e" stroke-width="2"/><path d="M2 11H19V13H2ZM14 23H30V26H14Z" fill="#b2e9f8"/><path d="M23 3Q29 4 28 12M24 9 28 13 32 9M9 30Q3 28 5 19M1 23 5 19 9 23" fill="none" stroke="#6e6e6e" stroke-width="2"/></svg><span>Switch</span>
        <svg width="31" height="26"><use href="#rows"/></svg><span>Clear</span>
        <svg width="30" height="30" viewBox="0 0 30 30"><use href="#rows" width="30" height="26"/><path d="M2 14H28V18H2Z" fill="#b2e9f8"/><path d="M0 17H18V30H0Z" fill="#eeeff2"/><path d="M4 18 15 29M15 18 4 29" stroke="#d0502e" stroke-width="3.600"/></svg><span>Delete</span>
        <svg width="32" height="32" viewBox="0 0 32 32"><path d="M6 12V1H31V18H27M6 6H31" fill="#fff" stroke="#6e6e6e" stroke-width="2"/><path d="M8 2H30V5H8Z" fill="#b2e9f8"/><rect x="1" y="12" width="25" height="19" fill="#fff" stroke="#6e6e6e" stroke-width="2"/><path d="M2 13H25V16H2ZM2 26H25V30H2Z" fill="#b2e9f8"/><path d="M1 18H26M1 24H26" stroke="#6e6e6e" stroke-width="2"/></svg><span>Copy</span>
        <svg width="28" height="27" viewBox="0 0 28 27"><path d="M0 0H28V6.500H0ZM0 10H28V16.500H0ZM0 20H28V26.500H0Z" fill="#5e5e5e"/></svg>
      </div>
      <div class="gridbox">
        <div class="grid">
          <div class="cell corner"><svg width="27" height="26" viewBox="0 0 27 26"><path d="M27 0V26H0Z" fill="#c6c6c6"/></svg></div>
          <div class="cell th act">OBJECTID *</div><div class="cell th">Shape *</div><div class="cell th fid">FID_Mpio25899_DiviPol</div><div class="cell th fid">FID_Mpio25899_MOT2013_Mpio25899_MOT2013_IGAC_2013_CurvasNivel_St</div><div class="cell th len">Shape_Length</div><div class="cell th">Shape_Area</div>
          <div class="cell rh">1</div><div class="cell ob">183</div><div class="cell cyn">Polygon</div><div class="cell cyn r">-1</div><div class="cell cyn r">1</div><div class="cell cyn r">23203.174959</div><div class="cell cyn r">10231916.624141</div>
          <div class="cell nrh"></div><div class="cell new">Click to add new row.</div>
        </div>
        <div class="vs"><svg width="16" height="10" viewBox="0 0 16 10"><path d="M1 9 8 2 15 9" fill="none" stroke="#c4c4c4" stroke-width="2"/></svg><svg width="16" height="10" viewBox="0 0 16 10"><path d="M1 1 8 8 15 1" fill="none" stroke="#c4c4c4" stroke-width="2"/></svg></div>
        <div class="hs"><svg width="10" height="16" viewBox="0 0 10 16"><path d="M9 1 2 8 9 15" fill="none" stroke="#c4c4c4" stroke-width="2"/></svg><svg width="10" height="16" viewBox="0 0 10 16"><path d="M1 1 8 8 1 15" fill="none" stroke="#c4c4c4" stroke-width="2"/></svg></div>
        <div class="hv"></div>
      </div>
      <div class="tfoot">
        <div class="fb"><svg width="30" height="26" viewBox="0 0 30 26"><use href="#rows" width="30" height="26"/><path d="M2 8H28V12H2ZM2 20H28V24H2Z" fill="#b2e9f8"/></svg></div>
        <svg class="up4" width="31" height="21" viewBox="0 0 31 21"><path d="M1 1H30V20H1Z" fill="#b2e9f8" stroke="#6e6e6e" stroke-width="2"/><path d="M1 7.500H30M1 13.500H30" stroke="#6e6e6e" stroke-width="2"/></svg>
        <svg width="19" height="18" viewBox="0 0 19 18"><path d="M1 0V18" stroke="#aaa" stroke-width="2"/><path d="M18 0V18L4 9Z" fill="#b9b9b9"/></svg>
        <svg width="19" height="18" viewBox="0 0 19 18"><path d="M18 0V18" stroke="#aaa" stroke-width="2"/><path d="M1 0V18L15 9Z" fill="#b9b9b9"/></svg>
        <span class="cut">1 of 1 selected</span><span>Filters:</span>
        <div class="filt"><svg width="30" height="30" viewBox="0 0 30 30"><circle cx="15" cy="15" r="14" fill="#fff" stroke="#d4d4d8" stroke-width="2"/><circle cx="15" cy="15" r="10" fill="#dcecf2"/><path d="M15 8V17H22" fill="none" stroke="#b5bcc4" stroke-width="2"/></svg><svg width="30" height="30" viewBox="0 0 30 30"><circle cx="15" cy="15" r="14" fill="#fff" stroke="#d4d4d8" stroke-width="2"/><circle cx="15" cy="15" r="10" fill="#dcecf2"/><path d="M1 10H12M18 10H28M8 2V17M20 2V17" stroke="#bcd9ec" stroke-width="2"/><path d="M18 14C26 14 24 22 18 24Z" fill="#cfe3cf"/></svg></div>
        <svg width="33" height="30" viewBox="0 0 33 30"><path d="M1 1H26L17 12V29H11V12Z" fill="#a9a9a9" stroke="#555" stroke-width="2"/><path d="M19 14H32M19 21H32M19 28H32" stroke="#3b8fd0" stroke-width="4" stroke-dasharray="4 2"/></svg><s></s>
        <svg width="18" height="32" viewBox="0 0 18 32"><path d="M9 1V15M2 9 9 2 16 9" fill="none" stroke="#b5d3b2" stroke-width="4"/><path d="M9 16V30M2 22 9 30 16 22" fill="none" stroke="#f2cba0" stroke-width="4"/></svg>
        <svg width="12" height="4"><rect width="12" height="4" fill="#555"/></svg>
        <div class="slider"><i></i><u></u></div>
        <svg width="17" height="16" viewBox="0 0 17 16"><path d="M8.500 0V16M0 8H17" stroke="#555" stroke-width="3"/></svg>
        <div class="pct"><span>130 %</span><em>▼</em></div><s></s>
        <svg width="33" height="33"><use href="#refresh"/></svg>
      </div>
    </div>
  </section>

  <aside class="rightcol">
    <div class="panel modify">
      <div class="phead"><h2>Modify Features</h2><span class="q">?</span><svg width="16" height="10"><use href="#chev"/></svg><svg width="14" height="20"><use href="#pin"/></svg><svg width="20" height="20"><use href="#x"/></svg></div>
      <div class="mode"><svg width="36" height="36" viewBox="0 0 36 36"><circle cx="18" cy="18" r="16.800" fill="none" stroke="#6a6a6a" stroke-width="2"/><path d="M17 9 9 18 17 27M10 18H28" fill="none" stroke="#6a6a6a" stroke-width="3.400"/></svg><svg width="32" height="32" viewBox="0 0 32 32"><path d="M16 0V8M16 24V32M0 16H9M23 16H32M5 4 10 10M22 22 27 28M27 27 22 22M4 8 10 12M23 21 28 25M8 3 12 9" stroke="#ecdc83" stroke-width="3.600"/><path d="M16 1V7M16 25V31M2 16H8M24 16H30" stroke="#8a8a6a" stroke-width="1.200"/><path d="M6 26 27 5" stroke="#6e6e6e" stroke-width="2.400"/><path d="M4 23H9V28H4ZM24 3H29V8H24ZM14 14H19V19H14Z" fill="#e88f74" stroke="#c9502e" stroke-width="1.800"/></svg><span>Explode</span></div>
      <div class="info"><svg width="24" height="24" viewBox="0 0 24 24"><circle cx="12" cy="12" r="12" fill="#55a3dc"/><path d="M12 4V7.500M9 10.500H13V19M8 19H16" fill="none" stroke="#fff" stroke-width="3"/></svg><span>Unselect single part features.</span><svg width="19" height="17" viewBox="0 0 19 17"><path d="M1 1 18 16M18 1 1 16" stroke="#8a8a8a" stroke-width="2.200"/></svg></div>
      <div class="ptabs"><b>Features</b><span>Parts</span></div>
      <div class="pick"><svg width="44" height="48" viewBox="0 0 44 48"><use href="#poly" x="13" y="0" width="30" height="30"/><path d="M1 16 24 33H15L19 45 13 48 8 36 1 42Z" fill="#6a6a6a" stroke="#f7f9f9" stroke-width="1"/></svg><span class="cut">Select one or more multipart features</span><svg width="17" height="11"><use href="#chev"/></svg></div>
      <div class="list">
        <div class="l1"><svg width="12" height="12" viewBox="0 0 13 12"><path d="M12 1V11H1Z" fill="#555" stroke="#222" stroke-width="1.500"/></svg><span>VeredaDANEUnionLimiteMOT (1)</span></div>
        <div class="l2"><svg width="24" height="24" viewBox="0 0 24 24"><path d="M12 1 23 23H1Z" fill="#fad6a6" stroke="#ea9a41" stroke-width="2"/><path d="M12 7V15M12 17V21" stroke="#444" stroke-width="3.600"/></svg><span>-1</span></div>
      </div>
      <div class="keep"><i class="cb"></i><span class="cut">Keep original features</span></div>
      <div class="explode">Explode</div>
    </div>
    <div class="btabs"><span>Catalog</span><span>Geoprocessi...</span><span class="cur">Modify Featur...</span><span>Symbology</span><span>Label Class</span></div>
  </aside>
</main>

<div class="dialog">
  <div class="dhead"><h2>Paste Special</h2><svg width="22" height="21" viewBox="0 0 20 20"><path d="M1 1 19 19M19 1 1 19" fill="none" stroke="#777" stroke-width="1.700"/></svg></div>
  <div class="dbody">
    <span class="into">Paste into</span>
    <div class="dtabs"><b>Template</b><span>Layer</span></div>
    <div class="combo"><i></i><span>Mpio25899_DiviPol</span><svg width="16" height="10"><use href="#chev"/></svg></div>
    <div class="dkeep"><i class="cb"><svg><use href="#check"/></svg></i><span>Keep source attribute values</span></div>
    <a>Learn more about paste special</a>
  </div>
  <div class="dbtn"><div>OK</div><div>Cancel</div></div>
</div>
</body>
</html>
```
FILE: styles.css
```css
* { box-sizing: border-box; }
body {
  margin: 0; width: 3834px; height: 2062px; overflow: hidden;
  background: #ebebeb; color: #4a4a4a;
  font: 24px/32px "Open Sans", "Noto Sans", sans-serif;
  letter-spacing: -0.03em; white-space: nowrap;
  display: grid; grid-template-rows: 62px 56px 187px 1fr;
}
svg { display: block; flex: none; overflow: visible; }
h2, h3, h4 { margin: 0; font-weight: 400; }
s { display: block; width: 2px; height: 31px; background: #b0b0b0; }
.defs { position: absolute; }
.cv { width: 13px; height: 9px; color: #555; }
.g5 { color: #555; }
.g6 { color: #666; }
.k { color: #222; }
.k5 { color: #555; }
.blue { color: #55a3dc; }
.lg { color: #c8caca; }
.cut { letter-spacing: -0.024em; }

/* title bar */
.titlebar {
  background: #f7f9f9; display: grid; align-items: center; padding-left: 15px;
  grid-template-columns: 55px 57px 52px 45px 28px 46px 44px 1329px 130px 983px 579px 80px 83px 85px 88px 87px 30px;
  color: #707070;
}
.i32 { width: 32px; height: 32px; }
.i30 { width: 30px; height: 30px; }
.cmd {
  width: 360px; height: 48px; border: 2px solid #989898; border-radius: 6px;
  display: flex; align-items: center; padding-left: 13px; gap: 11px; color: #8c8c8c;
}
.avatar {
  width: 48px; height: 48px; border-radius: 50%; background: #1b1b1b; color: #9a9a9a;
  font-size: 15px; text-align: center; line-height: 47px;
}
.help { font-size: 28px; }

/* ribbon tabs */
.tabs {
  background: #f7f9f9; color: #1f1f1f; font-size: 26px; line-height: 54px; padding-left: 35px; display: grid;
  grid-template-columns: 151px 118px 129px 158px 119px 109px 158px 132px 180px 127px 502px;
}
.tabs .on { font-weight: 600; width: 56px; margin-left: -1px; padding-left: 1px; height: 51px; border-bottom: 6px solid #0079cc; }
.context {
  height: 50px; margin-top: 1px; background: #fff; border: 2px solid #dfe1e1; border-radius: 6px;
  display: grid; grid-template-columns: 222px 163px 60px; padding-left: 31px; line-height: 48px;
}

/* ribbon */
.ribbon { background: #f7f9f9; border-bottom: 2px solid #c3c4c8; display: flex; position: relative; color: #262626; }
.group { position: relative; height: 185px; }
.group::after { content: ""; position: absolute; right: 0; top: 3px; width: 2px; height: 174px; background: #b9b9b9; }
.g-clip { width: 267px; padding-left: 5px; }
.g-nav { width: 418px; padding-left: 12px; }
.g-layer { width: 486px; padding-left: 11px; }
.g-sel { width: 492px; padding-left: 14px; }
.g-inq { width: 494px; padding-left: 18px; }
.g-lab { width: 344px; padding-left: 21px; }
.g-off { width: 290px; padding-left: 14px; }
.tools { display: flex; height: 153px; padding-top: 1px; }
.group h4 { position: absolute; left: 0; right: 4px; top: 151px; text-align: center; color: #606060; line-height: 32px; }
.launch { position: absolute; right: 7px; top: 161px; width: 16px; height: 16px; }
.big { width: 92px; height: 144px; display: flex; flex-direction: column; align-items: center; padding-top: 6px; text-align: center; }
.big > svg:first-child { width: 64px; height: 64px; }
.big b { font-weight: 400; line-height: 28px; margin-top: 6px; }
.big > .cv { margin-top: 12px; }
.cv.in { display: inline-block; margin-left: 8px; vertical-align: 3px; }
.g-nav .big:first-child { width: 96px; }
.w74 { width: 74px; }
.w78 { width: 78px; }
.w92 { width: 92px; }
.w96 { width: 96px; }
.w114 { width: 114px; }
.w116 { width: 116px; }
.w120 { width: 120px; }
.w128 { width: 128px; }
.w136 { width: 136px; }
.w140 { width: 140px; }
.sel { width: 76px; background: #c3e7fa; border-radius: 6px; color: #24566f; }
.off { color: #9a9a9a; }
.small { display: grid; grid-template-rows: 48px 48px 48px; padding-top: 2px; margin-left: 4px; }
.small > div { display: flex; align-items: center; gap: 8px; padding-bottom: 3px; }
.small > div > svg:first-child, .lock { width: 32px; height: 32px; margin-top: 3px; }
.g-clip .small { margin-left: 0; }
.g-clip .small > div { gap: 6px; }
.g-layer .small { margin-left: 9px; }
.g-lab .small { width: 213px; margin-left: 0; }
.lock { margin-left: 9px; margin-right: -1px; }
.g-off .small { margin-left: 6px; }
.more { margin-left: 3px; }
.six { display: grid; grid-template-columns: 44px 40px; grid-template-rows: 48px 48px 48px; align-items: center; padding-left: 4px; width: 88px; }
.six svg { width: 32px; height: 32px; }
.collapse { position: absolute; right: 6px; top: 165px; }

/* workspace */
.work { display: grid; grid-template-columns: 549px 2482px 762px; padding: 11px 0 0 12px; column-gap: 12px; }
.panel { background: #f7f9f9; border: 2px solid #d2d4d8; border-radius: 8px; }
.contents { height: 1735px; }
.phead { display: flex; align-items: center; height: 67px; padding-left: 10px; color: #444; }
.phead h2 { font-size: 32px; color: #1f1f1f; flex: 1; padding-bottom: 1px; }
.contents .phead svg:nth-of-type(1) { margin-right: 21px; }
.contents .phead svg:nth-of-type(2) { margin-right: 19px; }
.contents .phead svg:nth-of-type(3) { margin-right: 14px; }
.searchrow { display: flex; align-items: center; padding-left: 7px; }
.search { margin-left: 15px; width: 490px; height: 48px; background: #fff; border: 2px solid #959595; display: flex; align-items: center; padding: 0 11px 0 10px; color: #666; }
.search i { flex: 1; color: #5a5a5a; }
.search svg:last-child { margin-left: 23px; }
.ticons { display: grid; grid-template-columns: 65px 65px 64px 62px 65px 60px 59px 40px; padding: 6px 0 0 39px; height: 76px; align-items: center; }
.ticons svg:last-child { margin-top: 18px; }
.tline { margin-left: 29px; width: 426px; height: 7px; margin-top: 2px; border-bottom: 2px solid #cacaca; }
.tline span { display: block; width: 64px; height: 6px; background: #0079cc; position: relative; top: 1px; }
.contents h3 { font-size: 26.500px; font-weight: 600; padding-left: 29px; line-height: 36px; margin-top: 23px; }
.tree { margin-top: 13px; }
.row { display: flex; height: 48px; align-items: center; padding-left: 26px; }
.row.root { padding-left: 4px; height: 47px; }
.root svg:nth-child(2) { margin: 0 10px 0 9px; }
.ex { width: 13px; height: 12px; margin-right: 6px; }
.col { width: 10px; height: 16px; margin-left: 6px; margin-right: 3px; }
.item { display: flex; align-items: center; flex: 1; height: 48px; padding-left: 3px; margin-right: 2px; border: 0; }
.selrow { background: #c5daed; border: 1px solid #0079cc; padding-left: 2px; }
.cb { width: 28px; height: 28px; background: #fff; border: 2px solid #959595; border-radius: 4px; margin-right: 10px; flex: none; }
.cb svg { width: 28px; height: 28px; margin: -2px; }
.ind { padding-left: 7px; }
.tb { padding-left: 14px; }
.row b { font-weight: 600; }
.sw { height: 46px; padding: 4px 0 0 56px; }
.sw.first { height: 47px; padding-top: 5px; }
.sw i { display: block; width: 40px; height: 32px; background: #b2b2b2; border: 2px solid #111; }
.sw .yellow { background: none; border: 3px solid #ff0; }
.ramp { height: 102px; padding: 0 0 0 56px; display: flex; }
.ramp > i { width: 40px; height: 96px; background: linear-gradient(#f7f7f7 0, #b8b8b8 14%, #70400f 30%, #7c0000 43%, #f2c01d 57%, #067c35 70%, #3fae2a 77%, #fdfdae 85%, #aef3e3 100%); }
.ramp div { display: flex; flex-direction: column; justify-content: space-between; padding-left: 12px; height: 98px; margin-top: -1px; }

/* map view */
.center { display: flex; flex-direction: column; }
.mtabs { height: 49px; border-bottom: 4px solid #0079cc; display: flex; align-items: center; justify-content: space-between; }
.mtab { width: 244px; height: 45px; background: #0079cc; color: #fff; border-radius: 6px 6px 0 0; display: flex; align-items: center; padding: 5px 0 0 13px; }
.mtab span { width: 157px; margin-left: 9px; }
.mchev { margin-right: 10px; color: #555; }
.mapframe { border: 2px solid #d2d4d8; width: 2482px; height: 1128px; background: #f7f9f9; }
.mapsvg { width: 2478px; height: 1076px; overflow: hidden; }
.mapsvg svg { overflow: hidden; }
.ln path { fill: none; stroke: #000; stroke-width: 2.700px; vector-effect: non-scaling-stroke; stroke-linejoin: round; }
.ln .w { fill: #fff; }
.ln .g { fill: #b2b2b2; }
#c6, #c7 { fill: none; vector-effect: non-scaling-stroke; stroke-linejoin: round; }
.cy { stroke: #21eeee; stroke-width: 7px; }
.cd { stroke: #00b9be; stroke-width: 2.400px; }
.lbl text { font: 26.700px "DejaVu Sans Condensed", "DejaVu Sans", sans-serif; letter-spacing: 0; fill: #000; stroke: #fff; stroke-width: 5px; paint-order: stroke; stroke-linejoin: round; }
.mstatus {
  height: 48px; display: grid; align-items: center; padding-left: 10px;
  grid-template-columns: 209px 9px 45px 38px 41px 39px 46px 34px 580px 319px 595px 35px 20px 9px 274px 18px 44px 16px 42px 13px 44px;
}
.scale { width: 200px; height: 44px; border: 2px solid #8f8f8f; background: #fff; display: flex; align-items: center; justify-content: space-between; padding: 0 9px 0 11px; color: #222; }
em { font-style: normal; font-size: 11px; color: #555; font-family: "DejaVu Sans", sans-serif; letter-spacing: 0; }
.hl { width: 40px; height: 40px; background: #9dcbee; border: 2px solid #0b62a0; display: grid; place-items: center; }
.selfeat { width: 266px; height: 42px; background: #fff; display: flex; align-items: center; gap: 6px; padding-left: 6px; letter-spacing: -0.025em; }

/* attribute table */
.ttabs { margin-top: 12px; height: 50px; border-bottom: 6px solid #d2d3d8; display: flex; align-items: center; justify-content: space-between; }
.ttab { width: 421px; height: 44px; background: #d2d3d8; border-radius: 6px 6px 0 0; display: flex; align-items: center; padding: 5px 0 0 12px; color: #555; }
.ttab span { width: 335px; margin-left: 12px; }
.tpanel { background: #f7f9f9; border: 2px solid #d2d4d8; border-top: 0; height: 496px; padding: 2px 2px 0 2px; display: flex; flex-direction: column; }
.ttool {
  height: 60px; border: 2px solid #c0c3c8; background: #eeeff2; display: grid; align-items: center; padding-left: 10px;
  grid-template-columns: 77px 38px 63px 38px 118px 15px 127px 39px 227px 39px 114px 38px 89px 38px 74px 39px 89px 39px 1117px 40px;
}
.ttool b { font-weight: 700; }
.ttool s { height: 44px; background: #cfcfd3; }
.fade { opacity: .45; }
.dis { color: #bcbcbc; }
.gridbox { margin-top: 2px; height: 377px; border: 2px solid #c9c9c9; background: #fff; display: grid; grid-template-columns: 1fr 44px; grid-template-rows: 330px 43px; }
.grid { display: grid; grid-template-columns: 58px 175px 127px 339px 1049px 209px 246px; grid-template-rows: 61px 63px 62px; font-size: 28.600px; width: 2203px; }
.cell { border-right: 2px solid #c9c9c9; border-bottom: 2px solid #c9c9c9; padding: 0 12px; display: flex; align-items: center; overflow: hidden; }
.th { background: #ebebeb; font-weight: 700; border-right-color: #d6d6d6; padding: 3px 8px 0 11px; overflow: visible; }
.fid { letter-spacing: -0.0155em; }
.len { letter-spacing: -0.035em; }
.act { background: #c8e2f6; border-bottom: 5px solid #0079cc; }
.corner { padding: 25px 0 0 24px; background: #fff; border-color: #ddd; }
.rh { background: #c8e2f6; border-right: 5px solid #0079cc; }
.ob { background: #c8e2f6; }
.cyn { background: #8affff; }
.r { justify-content: flex-end; letter-spacing: -0.04em; }
.nrh, .new { background: #ebebeb; }
.nrh { border-bottom: 0; }
.new { grid-column: 2 / 8; letter-spacing: -0.027em; }
.vs { background: #f4f4f4; display: flex; flex-direction: column; justify-content: space-between; align-items: center; padding: 18px 0 16px; }
.hs { background: #f4f4f4; display: flex; justify-content: space-between; align-items: center; padding: 0 17px 0 18px; }
.hv { background: #ebebeb; }
.tfoot {
  flex: 1; display: grid; align-items: center;
  grid-template-columns: 84px 66px 45px 46px 1504px 77px 92px 37px 15px 48px 28px 213px 31px 131px 14px 43px;
}
.fb { width: 64px; height: 44px; background: #c2c4ca; border: 3px solid #3cadec; display: grid; place-items: center; }
.up4 { margin-bottom: 6px; }
.filt { width: 84px; height: 48px; background: #eeeff2; display: flex; align-items: center; gap: 12px; padding-left: 8px; }
.slider { width: 200px; height: 6px; background: #dedede; position: relative; }
.slider i { display: block; width: 112px; height: 6px; background: #757575; }
.slider u { position: absolute; left: 112px; top: -8px; width: 5px; height: 22px; background: #606060; }
.pct { width: 120px; height: 44px; background: #fff; display: flex; align-items: center; justify-content: space-between; padding: 0 9px 0 13px; color: #222; }

/* modify features */
.rightcol { display: flex; flex-direction: column; margin-left: 1px; }
.modify { height: 1697px; display: flex; flex-direction: column; padding: 0 9px 0 9px; }
.modify .phead { padding-left: 1px; height: 66px; flex: none; }
.q { font-size: 26px; font-weight: 600; margin-right: 19px; }
.modify .phead svg:nth-of-type(1) { margin-right: 22px; }
.modify .phead svg:nth-of-type(2) { margin-right: 19px; }
.modify .phead svg:nth-of-type(3) { margin-right: 5px; }
.mode { display: grid; grid-template-columns: 296px 40px 1fr; align-items: center; height: 38px; padding-left: 2px; font-size: 30px; }
.info { height: 52px; margin-top: 17px; background: #dcedf9; display: grid; grid-template-columns: 58px 1fr 34px; align-items: center; padding-left: 26px; }
.ptabs { display: flex; padding-left: 8px; height: 60px; }
.ptabs b { font-weight: 600; width: 100px; margin-right: 20px; line-height: 70px; height: 60px; border-bottom: 4px solid #0079cc; }
.ptabs span { line-height: 70px; }
.pick { display: grid; grid-template-columns: 59px 1fr 26px; align-items: center; height: 60px; margin-top: 28px; padding-left: 22px; color: #4a4a4a; }
.list { height: 260px; margin-top: 14px; background: #fcfcfd; border: 2px solid #dfe1e2; padding: 5px 0 0 13px; }
.l1, .l2 { display: flex; align-items: center; height: 36px; }
.l1 span { margin-left: 17px; }
.l1 svg { margin-bottom: 8px; }
.l2 { padding-left: 33px; gap: 10px; }
.keep { display: flex; align-items: center; height: 40px; margin-top: 26px; color: #222; }
.keep .cb { margin-right: 11px; }
.explode { margin-top: auto; margin-bottom: 10px; align-self: flex-end; width: 140px; height: 48px; border: 2px solid #b2b4b4; color: #c9cbcb; text-align: center; line-height: 43px; background: #fafcfc; }
.btabs { display: grid; grid-template-columns: 106px 169px 190px 158px 120px; padding-left: 10px; margin-top: -2px; line-height: 42px; color: #4a4a4a; }
.btabs .cur { background: #f7f9f9; border: 2px solid #d2d4d8; border-top: 0; border-radius: 0 0 8px 8px; color: #0079cc; padding-left: 9px; height: 43px; }
.btabs span:nth-child(4) { padding-left: 14px; }
.btabs span:nth-child(5) { padding-left: 0; }

/* paste special */
.dialog { position: absolute; left: 2041px; top: 641px; width: 523px; height: 479px; background: #f7f9f9; border: 2px solid #d0d3d5; border-radius: 14px; padding: 0 20px; }
.dhead { display: flex; justify-content: space-between; align-items: center; height: 80px; padding: 0 12px 19px 0; margin-left: -4px; color: #777; }
.dhead h2 { font-size: 32px; }
.dbody { height: 297px; border: 2px solid #c8caca; background: #fff; padding: 17px 24px 0 19px; display: flex; flex-direction: column; }
.into { height: 36px; line-height: 36px; }
.dtabs { display: flex; gap: 21px; padding-left: 9px; height: 47px; line-height: 43px; }
.dtabs b { font-weight: 700; width: 107px; border-bottom: 4px solid #0079cc; }
.combo { width: 428px; height: 45px; margin: 18px 0 0 4px; border: 2px solid #ababab; display: flex; align-items: center; padding: 0 6px 0 14px; color: #333; }
.combo i { width: 32px; height: 26px; background: #b2b2b2; border: 2px solid #111; margin-right: 10px; }
.combo span { flex: 1; line-height: 26px; padding-bottom: 2px; }
.dkeep { display: flex; align-items: center; height: 36px; margin-top: 20px; color: #222; }
.dkeep .cb { margin-right: 12px; }
.dbody a { color: #0b62a0; padding-left: 20px; margin-top: 19px; }
.dbtn { display: flex; justify-content: flex-end; gap: 20px; margin-top: 30px; }
.dbtn div { width: 140px; height: 48px; border: 2px solid #4c4c4c; background: #fbfcfc; text-align: center; line-height: 43px; }
```
